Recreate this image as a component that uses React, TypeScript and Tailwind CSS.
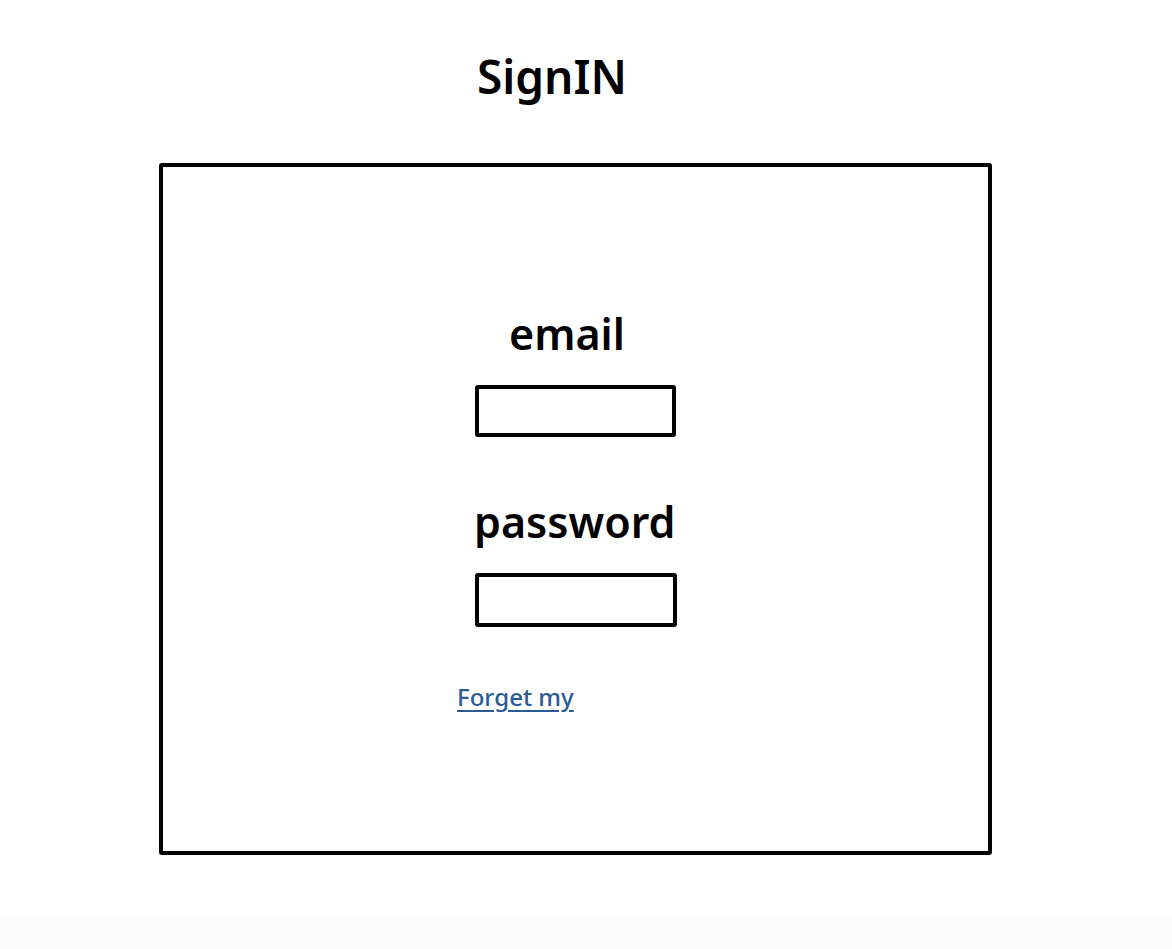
export default function App() {
  return (
    <div className="flex flex-col h-[949px] w-full bg-white text-black font-['Noto_Sans',sans-serif]">
      <h1 className="pt-[53px] pl-[477px] text-[46px] leading-[46px] font-semibold">SignIN</h1>

      <div className="mt-[64px] ml-[159px] w-[833px] h-[692px] border-[4px] border-black rounded-[3px] flex flex-col items-start">
        <label className="mt-[145px] ml-[346px] text-[43px] leading-[44px] font-semibold">email</label>
        <div className="mt-[29px] ml-[312px] w-[201px] h-[52px] border-[4px] border-black rounded-[3px]" />

        <label className="mt-[63px] ml-[311px] text-[43px] leading-[44px] font-semibold">password</label>
        <div className="mt-[29px] ml-[312px] w-[202px] h-[54px] border-[4px] border-black rounded-[3px]" />

        <a href="#" className="mt-[57px] ml-[294px] text-[24px] leading-[25px] font-medium text-[#2a5a98] underline underline-offset-[4px]">
          Forget my
        </a>
      </div>

      <div className="mt-auto h-[33px] bg-[#fbfbfb]" />
    </div>
  );
}
